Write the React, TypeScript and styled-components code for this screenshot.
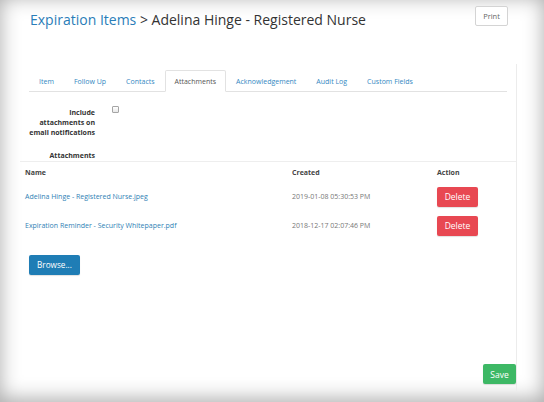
import React from "react";
import styled, { createGlobalStyle } from "styled-components";

const Global = createGlobalStyle`
  html, body { margin: 0; padding: 0; background: #fff; }
  body { font-family: "Open Sans", "Liberation Sans", sans-serif; }
  * { box-sizing: border-box; }
`;

const Page = styled.div`
  width: 544px;
  height: 402px;
  overflow: hidden;
  background: #fff;
  box-shadow: inset 0 -3px 20px rgba(0, 0, 0, 0.34);
  display: flex;
  flex-direction: column;
`;

const Header = styled.div`
  display: flex;
  justify-content: space-between;
  align-items: flex-start;
  padding: 6px 36px 0 30px;
  height: 64px;
`;

const Title = styled.h1`
  margin: 4px 0 0;
  font-size: 14px;
  font-weight: 400;
  line-height: 20px;
  color: #333;
`;

const Crumb = styled.a`
  color: #2a7db8;
  text-decoration: none;
`;

const PrintButton = styled.button`
  font-family: inherit;
  font-size: 7.5px;
  color: #666;
  background: #fff;
  border: 1px solid #d4d4d4;
  border-radius: 2px;
  width: 33px;
  height: 20px;
  padding: 0;
`;

const Panel = styled.div`
  margin-left: 20px;
  width: 497px;
  height: 328px;
  border-right: 1px solid #ececec;
  display: flex;
  flex-direction: column;
  padding-top: 6px;
`;

const Tabs = styled.ul`
  list-style: none;
  margin: 0 9px 0 9px;
  padding: 0;
  display: flex;
  border-bottom: 1px solid #e2e2e2;
`;

const Tab = styled.li<{ $active?: boolean }>`
  height: 22px;
  padding: 0 9px;
  display: flex;
  align-items: center;
  font-size: 7px;
  color: ${(p) => (p.$active ? "#555" : "#3388c2")};
  border: 1px solid ${(p) => (p.$active ? "#e2e2e2" : "transparent")};
  border-bottom-color: transparent;
  background: ${(p) => (p.$active ? "#fff" : "transparent")};
  margin-bottom: -1px;
  border-radius: 2px 2px 0 0;
`;

const FormRow = styled.div<{ $top: number }>`
  display: grid;
  grid-template-columns: 66px 1fr;
  column-gap: 17px;
  padding-left: 9px;
  margin-top: ${(p) => p.$top}px;
`;

const Label = styled.div`
  text-align: right;
  font-size: 7px;
  font-weight: 700;
  line-height: 10px;
  color: #333;
`;

const Check = styled.input`
  appearance: none;
  display: block;
  width: 7px;
  height: 7px;
  margin: -2px 0 0;
  border: 1px solid #a5a5a5;
  border-radius: 1px;
  background: linear-gradient(#fff, #e8e8e8);
`;

const Table = styled.div`
  border-top: 1px solid #eeeeee;
  display: flex;
  flex-direction: column;
`;

const Row = styled.div<{ $head?: boolean }>`
  display: grid;
  grid-template-columns: 267px 145px 1fr;
  align-items: center;
  height: ${(p) => (p.$head ? 20 : 29)}px;
  font-size: 7px;
  font-weight: ${(p) => (p.$head ? 700 : 400)};
  color: ${(p) => (p.$head ? "#444" : "#777")};
`;

const Cell = styled.div`
  padding-left: 5px;
  white-space: nowrap;
`;

const FileLink = styled.a`
  color: #2f7fb5;
  text-decoration: none;
`;

const Btn = styled.button<{ $bg: string; $w: number; $fs: number }>`
  font-family: inherit;
  font-size: ${(p) => p.$fs}px;
  color: #fff;
  background: ${(p) => p.$bg};
  border: none;
  border-radius: 2px;
  width: ${(p) => p.$w}px;
  height: 20px;
  padding: 0;
  box-shadow: 0 1px 1px rgba(0, 0, 0, 0.12);
`;

const BrowseWrap = styled.div`
  margin: 11px 0 0 9px;
`;

const Footer = styled.div`
  margin-top: auto;
  margin-bottom: 8px;
  display: flex;
  justify-content: flex-end;
`;

const files = [
  { name: "Adelina Hinge - Registered Nurse.jpeg", created: "2019-01-08 05:30:53 PM" },
  { name: "Expiration Reminder - Security Whitepaper.pdf", created: "2018-12-17 02:07:46 PM" },
];

const tabs = ["Item", "Follow Up", "Contacts", "Attachments", "Acknowledgement", "Audit Log", "Custom Fields"];

export default function App() {
  return (
    <>
      <Global />
      <Page>
        <Header>
          <Title>
            <Crumb href="#">Expiration Items</Crumb> &gt; Adelina Hinge - Registered Nurse
          </Title>
          <PrintButton>Print</PrintButton>
        </Header>
        <Panel>
          <Tabs>
            {tabs.map((t) => (
              <Tab key={t} $active={t === "Attachments"}>
                {t}
              </Tab>
            ))}
          </Tabs>
          <FormRow $top={16}>
            <Label>Include attachments on email notifications</Label>
            <div>
              <Check type="checkbox" />
            </div>
          </FormRow>
          <FormRow $top={13}>
            <Label>Attachments</Label>
          </FormRow>
          <Table>
            <Row $head>
              <Cell>Name</Cell>
              <Cell>Created</Cell>
              <Cell>Action</Cell>
            </Row>
            {files.map((f) => (
              <Row key={f.name}>
                <Cell>
                  <FileLink href="#">{f.name}</FileLink>
                </Cell>
                <Cell>{f.created}</Cell>
                <Cell>
                  <Btn $bg="#e84852" $w={41} $fs={8.5}>
                    Delete
                  </Btn>
                </Cell>
              </Row>
            ))}
          </Table>
          <BrowseWrap>
            <Btn $bg="#1f7db5" $w={51} $fs={8.2}>
              Browse...
            </Btn>
          </BrowseWrap>
          <Footer>
            <Btn $bg="#3db865" $w={33} $fs={8.5}>
              Save
            </Btn>
          </Footer>
        </Panel>
      </Page>
    </>
  );
}
